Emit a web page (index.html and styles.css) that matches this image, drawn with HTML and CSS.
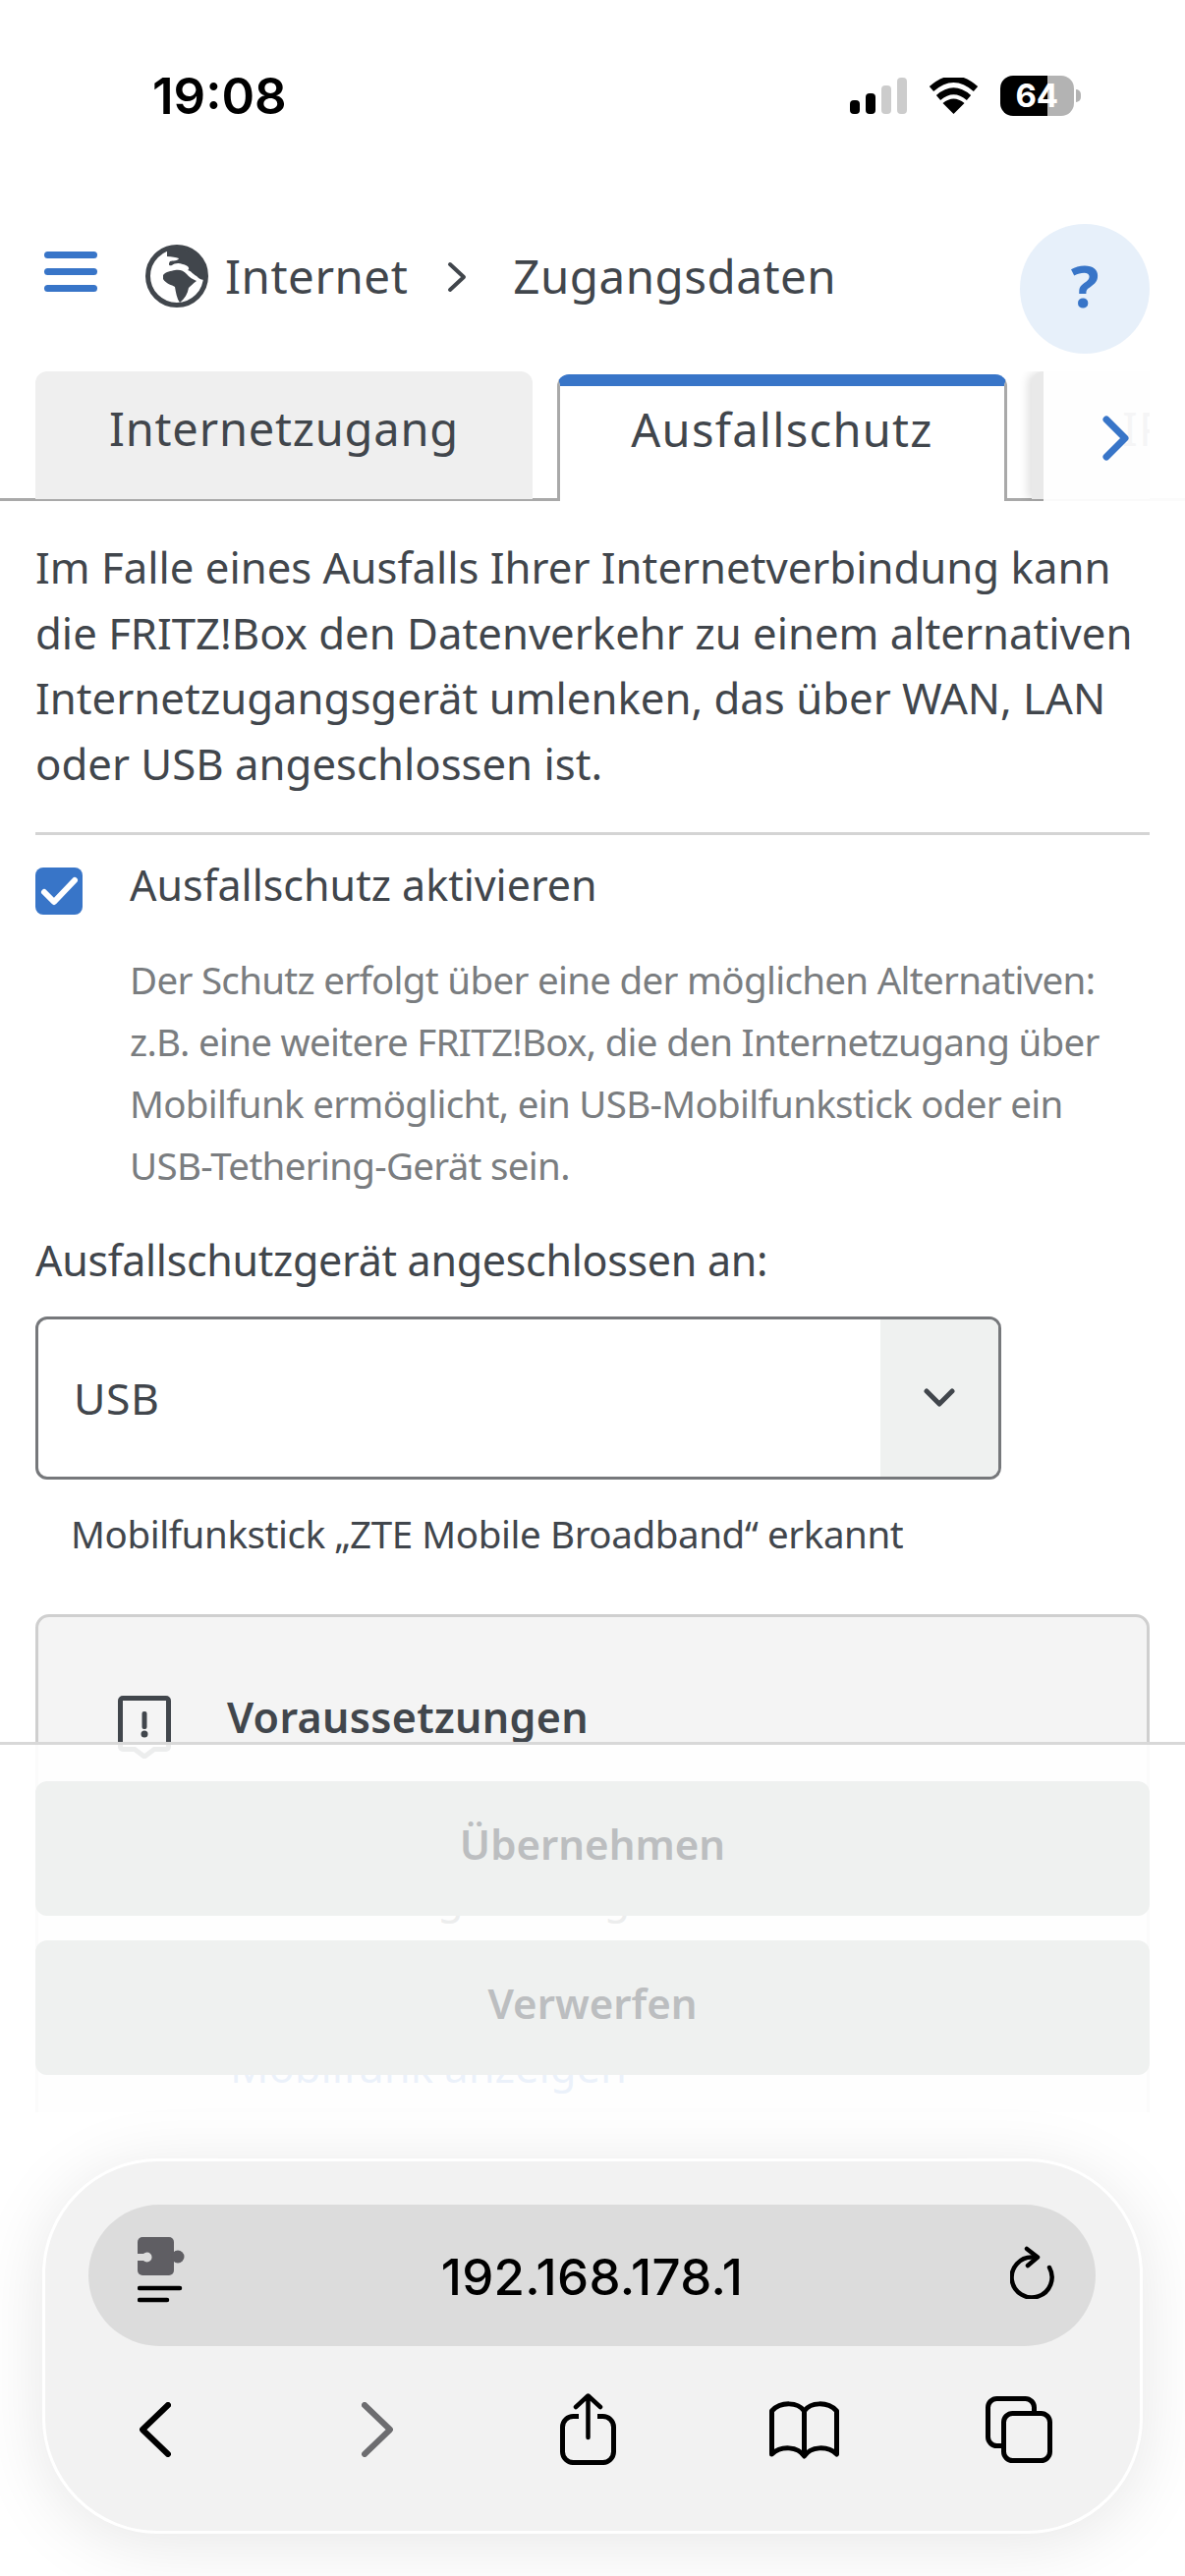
FILE: index.html
```html
<!DOCTYPE html>
<html lang="de">
<head>
<meta charset="utf-8">
<title>Zugangsdaten</title>
<link rel="stylesheet" href="styles.css">
</head>
<body>
<div class="page">
  <div class="status">
    <span class="time">19:08</span>
    <div class="status-icons">
      <svg class="signal" width="58" height="37" viewBox="0 0 58 37"><rect x="0" y="23" width="10" height="14" rx="4" fill="#000"/><rect x="16" y="16" width="10" height="21" rx="4" fill="#000"/><rect x="32" y="8" width="10" height="29" rx="4" fill="#ccc"/><rect x="48" y="0" width="10" height="37" rx="4" fill="#ccc"/></svg>
      <svg class="wifi" width="51" height="37" viewBox="0 0 51 37"><path d="M25.5 37 14.5 26Q25.500 17 36.500 26Z" fill="#000"/><path d="M10 20.500Q25.500 7 41 20.500" fill="none" stroke="#000" stroke-width="6.500"/><path d="M3 11.500Q25.500 -8.500 48 11.500" fill="none" stroke="#000" stroke-width="6.500"/></svg>
      <div class="battery"><span class="battery-level">64</span></div>
      <span class="battery-nub"></span>
    </div>
  </div>

  <header class="crumbs">
    <div class="burger"><span></span><span></span><span></span></div>
    <svg class="globe" width="64" height="64" viewBox="0 0 64 64"><circle cx="32" cy="32" r="29.500" fill="#fff" stroke="#41464c" stroke-width="5"/><path d="M22 5C30 2 50 3 60 24L61 36C57 36 55 35 52 32 48 30 47 27 43 26 46 24 43 21 38 20 34 18 29 19 27 21 24 22 23 20 25 17 28 16 33 17 34 14 31 13 27 12 22 12Z" fill="#41464c"/><path d="M18 31C21 27 26 27 30 26 34 25 39 26 42 30 44 33 48 35 52 37 48 40 46 42 44 44 43 50 40 55 35 59 32 55 31 49 30 43 27 41 21 40 18 35Z" fill="#41464c"/></svg>
    <span class="crumb crumb-first">Internet</span>
    <svg class="crumb-sep" width="20" height="32" viewBox="0 0 20 32"><path d="M3 3 17 16 3 29" fill="none" stroke="#41464c" stroke-width="4" stroke-linecap="round" stroke-linejoin="round"/></svg>
    <span class="crumb">Zugangsdaten</span>
    <button class="help">?</button>
  </header>

  <nav class="tabs">
    <div class="tab-list">
      <div class="tab tab-first">Internetzugang</div>
      <div class="tab tab-active">Ausfallschutz</div>
      <div class="tab tab-next">IPv6</div>
    </div>
    <div class="tab-fade">
      <svg width="27" height="46" viewBox="0 0 27 46"><path d="M4 4 23 23 4 42" fill="none" stroke="#3875c8" stroke-width="7" stroke-linecap="round" stroke-linejoin="round"/></svg>
    </div>
  </nav>

  <main class="content">
    <p class="intro">Im Falle eines Ausfalls Ihrer Internetverbindung kann<br>die FRITZ!Box den Datenverkehr zu einem alternativen<br>Internetzugangsgerät umlenken, das über WAN, LAN<br>oder USB angeschlossen ist.</p>
    <div class="rule"></div>
    <label class="check">
      <span class="box"><svg width="48" height="48" viewBox="0 0 48 48"><path d="M9 25 19 35 40 13" fill="none" stroke="#fff" stroke-width="6" stroke-linecap="round" stroke-linejoin="round"/></svg></span>
      <span class="check-label">Ausfallschutz aktivieren</span>
    </label>
    <p class="desc">Der Schutz erfolgt über eine der möglichen Alternativen:<br>z.B. eine weitere FRITZ!Box, die den Internetzugang über<br>Mobilfunk ermöglicht, ein USB-Mobilfunkstick oder ein<br>USB-Tethering-Gerät sein.</p>
    <div class="field-label">Ausfallschutzgerät angeschlossen an:</div>
    <div class="select">
      <span class="select-value">USB</span>
      <span class="select-btn"><svg width="32" height="20" viewBox="0 0 32 20"><path d="M3 3 16 16 29 3" fill="none" stroke="#41464c" stroke-width="5" stroke-linecap="round" stroke-linejoin="round"/></svg></span>
    </div>
    <div class="hint">Mobilfunkstick „ZTE Mobile Broadband“ erkannt</div>
    <section class="card">
      <div class="card-head">
        <svg class="card-icon" width="54" height="64" viewBox="0 0 54 64"><path d="M5 2.500H49A2.500 2.500 0 0 1 51.500 5V52A2.500 2.500 0 0 1 49 54.500H37L27 62 17 54.500H5A2.500 2.500 0 0 1 2.500 52V5A2.500 2.500 0 0 1 5 2.500Z" fill="none" stroke="#41464c" stroke-width="5"/><rect x="24.500" y="16" width="5" height="18" rx="2" fill="#41464c"/><circle cx="27" cy="39" r="3.500" fill="#41464c"/></svg>
        <span class="card-title">Voraussetzungen</span>
      </div>
      <p class="card-text">Verbindung mit Zugriff</p>
      <a class="card-link">Mobilfunk anzeigen</a>
    </section>
  </main>

  <div class="actions">
    <button class="action">Übernehmen</button>
    <button class="action">Verwerfen</button>
    <div class="actions-fade"></div>
  </div>

  <div class="safari">
    <div class="pill">
      <svg class="puzzle" width="48" height="68" viewBox="0 0 48 68"><rect x="0" y="0" width="37" height="39" rx="5" fill="#5f5e63"/><circle cx="41" cy="20" r="6.500" fill="#5f5e63"/><path d="M-1 17H6A5 5 0 1 1 6 24H-1Z" fill="#dcdcdc"/><path d="M2 52H43" stroke="#000" stroke-width="4.500" stroke-linecap="round"/><path d="M2 64H30" stroke="#000" stroke-width="4.500" stroke-linecap="round"/></svg>
      <span class="url">192.168.178.1</span>
      <svg class="reload" width="46" height="54" viewBox="0 0 46 54"><path d="M40 22A20.500 20.500 0 1 1 23 11.500" fill="none" stroke="#000" stroke-width="4.500" stroke-linecap="round"/><path d="M17 3 28 11.500 18 20" fill="none" stroke="#000" stroke-width="4.500" stroke-linecap="round" stroke-linejoin="round"/></svg>
    </div>
    <div class="tools">
      <svg class="tool-back" width="32" height="56" viewBox="0 0 32 56"><path d="M29 3 3 28 29 53" fill="none" stroke="#000" stroke-width="6" stroke-linecap="round" stroke-linejoin="round"/></svg>
      <svg class="tool-forward" width="32" height="56" viewBox="0 0 32 56"><path d="M3 3 29 28 3 53" fill="none" stroke="#6d6d70" stroke-width="6" stroke-linecap="round" stroke-linejoin="round"/></svg>
      <svg class="tool-share" width="57" height="73" viewBox="0 0 57 73"><path d="M19 23.500H14A11 11 0 0 0 2.500 34.500V59.500A11 11 0 0 0 14 70.500H43A11 11 0 0 0 54.500 59.500V34.500A11 11 0 0 0 43 23.500H38" fill="none" stroke="#000" stroke-width="5"/><path d="M28.500 3V45M16 14 28.500 2.500 41 14" fill="none" stroke="#000" stroke-width="4.500" stroke-linecap="round" stroke-linejoin="round"/></svg>
      <svg class="tool-book" width="71" height="60" viewBox="0 0 71 60"><path d="M35.500 11V56M35.500 11C29 2 12 1 2.500 11V55C12 46 29 47 35.500 57 42 47 59 46 68.500 55V11C59 1 42 2 35.500 11Z" fill="none" stroke="#000" stroke-width="5" stroke-linejoin="round"/></svg>
      <svg class="tool-tabs" width="68" height="68" viewBox="0 0 68 68"><rect x="2.500" y="2.500" width="47" height="48" rx="9" fill="none" stroke="#000" stroke-width="5"/><rect x="18.500" y="17.500" width="47" height="48" rx="9" fill="#f2f2f2" stroke="#000" stroke-width="5"/></svg>
    </div>
  </div>
</div>
</body>
</html>
```
FILE: styles.css
```css
* { box-sizing: border-box; }
html, body { margin: 0; padding: 0; background: #fff; }
.page { position: relative; width: 1206px; height: 2622px; overflow: hidden; background: #fff; font-family: "Noto Sans", sans-serif; color: #41464c; }

.status { height: 228px; padding: 77px 0 0 155px; display: flex; align-items: flex-start; }
.time { font-family: Inter, sans-serif; font-weight: 600; font-size: 51px; line-height: 41px; color: #000; }
.status-icons { margin-left: 573px; padding-top: 2px; display: flex; align-items: flex-start; }
.signal { display: block; }
.wifi { display: block; margin-left: 22px; }
.battery { margin: -2px 0 0 22px; width: 75px; height: 41px; border-radius: 13px; background: linear-gradient(90deg, #000 0 64%, #b3b3b3 64% 100%); display: flex; align-items: center; justify-content: center; }
.battery-level { font-family: Inter, sans-serif; font-weight: 700; font-size: 33px; color: #fff; line-height: 41px; }
.battery-nub { width: 5px; height: 13px; margin: 12px 0 0 2px; background: #b3b3b3; border-radius: 0 6px 6px 0; }

.crumbs { height: 150px; padding-left: 45px; display: flex; align-items: flex-start; position: relative; }
.burger { margin-top: 28px; width: 54px; display: flex; flex-direction: column; gap: 10px; }
.burger span { display: block; height: 7px; border-radius: 4px; background: #3875c8; }
.globe { margin: 21px 0 0 49px; }
.crumb { font-size: 47.500px; line-height: 66px; margin-top: 20px; letter-spacing: .5px; }
.crumb-first { margin-left: 17px; }
.crumb-sep { margin: 38px 47px 0 40px; }
.help { position: absolute; left: 1038px; top: 0; width: 132px; height: 132px; border: 0; padding: 0 0 9px; border-radius: 50%; background: #e7f0fa; color: #3875c8; font-family: "Noto Sans", sans-serif; font-weight: 700; font-size: 60px; line-height: 82px; }

.tabs { position: relative; height: 132px; border-bottom: 3px solid #a9a9a9; }
.tab-list { display: flex; width: 1170px; height: 132px; padding-left: 36px; gap: 25px; overflow: hidden; }
.tab { height: 130px; font-size: 47px; line-height: 66px; letter-spacing: .8px; padding-top: 25px; text-align: center; border-radius: 12px 12px 0 0; flex: none; }
.tab-first { width: 506px; background: #efefef; }
.tab-active { width: 458px; height: 132px; margin-top: 3px; padding-top: 11px; letter-spacing: 1.300px; background: #fff; border: 3px solid #a9a9a9; border-top: 12px solid #3875c8; border-bottom: 0; position: relative; }
.tab-next { width: 300px; background: #e9e9e9; text-align: left; padding-left: 92px; box-shadow: -4px 0 10px rgba(0,0,0,.12); }
.tab-fade { position: absolute; left: 1062px; right: 0; top: 0; bottom: -3px; background: rgba(255,255,255,.95); padding: 45px 0 0 60px; }
.tab-fade svg { display: block; }

.content { padding: 34px 36px 0; }
.intro { margin: 0; font-size: 43.700px; line-height: 66.500px; white-space: nowrap; }
.rule { margin-top: 37px; height: 3px; background: #d4d4d4; }
.check { margin-top: 33px; display: flex; align-items: flex-start; gap: 48px; height: 48px; }
.box { width: 48px; height: 48px; border-radius: 8px; background: #3875c8; display: block; flex: none; }
.box svg { display: block; }
.check-label { font-size: 43px; line-height: 44px; margin-top: -4px; white-space: nowrap; }
.desc { margin: 35px 0 0 96px; font-size: 38.500px; line-height: 63px; letter-spacing: -.7px; color: #7a7d80; white-space: nowrap; }
.field-label { margin-top: 32px; font-size: 43px; line-height: 66px; letter-spacing: -.3px; }
.select { margin-top: 24px; width: 983px; height: 166px; border: 3px solid #76787b; border-radius: 12px; display: flex; overflow: hidden; }
.select-value { flex: 1; padding-left: 36px; font-size: 44.500px; line-height: 160px; letter-spacing: .5px; }
.select-btn { width: 120px; background: #eff1f0; display: flex; align-items: center; justify-content: center; }
.hint { margin: 22px 0 0 36px; font-size: 38.500px; line-height: 66px; letter-spacing: -.4px; white-space: nowrap; }
.card { margin-top: 49px; height: 700px; border: 3px solid #cfcfcf; border-radius: 14px; background: #f4f4f4; padding: 69px 0 0 81px; }
.card-head { display: flex; align-items: flex-start; gap: 57px; height: 66px; }
.card-icon { margin-top: 11px; flex: none; }
.card-title { font-size: 43px; line-height: 66px; font-weight: 600; letter-spacing: .3px; }
.card-text { margin: 116px 0 0 111px; font-size: 43.700px; line-height: 66px; }
.card-link { display: block; margin: 107px 0 0 114px; font-size: 43.500px; line-height: 66px; color: #3875c8; }

.actions { position: absolute; left: 0; right: 0; top: 1773px; bottom: 0; border-top: 3px solid #d8d8d8; background: rgba(255,255,255,.9); padding: 37px 36px 0; display: flex; flex-direction: column; gap: 25px; }
.action { height: 137px; border: 0; padding: 0 0 10px; border-radius: 12px; background: #eff1f0; color: #bcbec0; font-family: "Noto Sans", sans-serif; font-weight: 600; font-size: 42px; position: relative; z-index: 1; }
.actions-fade { position: absolute; left: 0; right: 0; top: 374px; bottom: 0; background: #fff; }

.safari { position: absolute; left: 43px; top: 2197px; width: 1120px; height: 382px; border: 3px solid #fff; border-radius: 118px; background: #f2f2f2; box-shadow: 0 10px 70px rgba(0,0,0,.1); padding: 44px 0 0 44px; }
.pill { width: 1025px; height: 144px; border-radius: 72px; background: #dcdcdc; display: flex; align-items: flex-start; position: relative; }
.puzzle { margin: 33px 0 0 50px; flex: none; }
.url { position: absolute; left: 0; right: 0; top: 44px; text-align: center; font-family: Inter, sans-serif; font-weight: 500; font-size: 51px; line-height: 60px; letter-spacing: .3px; color: #000; }
.reload { margin: 42px 0 0 840px; flex: none; }
.tools { margin-top: 48px; height: 73px; padding-left: 52px; display: flex; align-items: center; }
.tool-forward { margin-left: 194px; }
.tool-share { margin-left: 170px; }
.tool-book { margin-left: 156px; }
.tool-tabs { margin-left: 149px; }
```
